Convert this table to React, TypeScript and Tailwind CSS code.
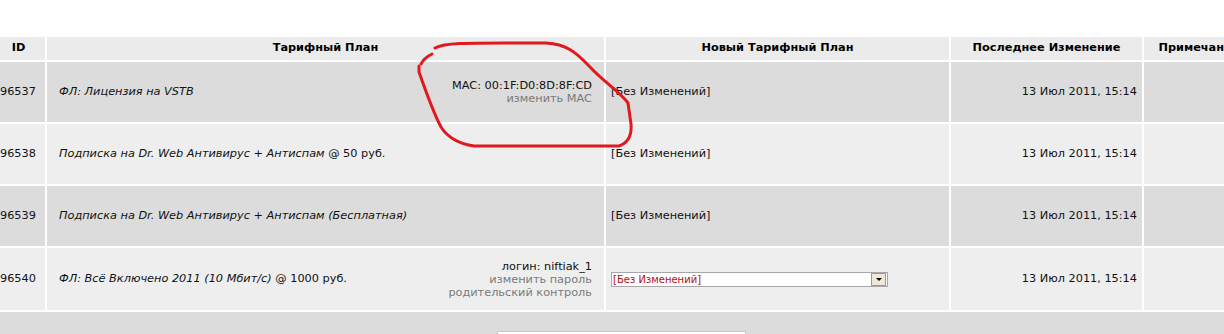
import React from 'react'

type Row = {
  id: string
  plan: string
  price?: string
  extra?: { main: string; links: string[] }
  select?: boolean
  dark: boolean
}

const rows: Row[] = [
  { id: '96537', plan: 'ФЛ: Лицензия на VSTB', extra: { main: 'MAC: 00:1F:D0:8D:8F:CD', links: ['изменить MAC'] }, dark: true },
  { id: '96538', plan: 'Подписка на Dr. Web Антивирус + Антиспам', price: '@ 50 руб.', dark: false },
  { id: '96539', plan: 'Подписка на Dr. Web Антивирус + Антиспам (Бесплатная)', dark: true },
  {
    id: '96540',
    plan: 'ФЛ: Всё Включено 2011 (10 Мбит/с)',
    price: '@ 1000 руб.',
    extra: { main: 'логин: niftiak_1', links: ['изменить пароль', 'родительский контроль'] },
    select: true,
    dark: false,
  },
]

function FakeSelect() {
  return (
    <div className="flex h-[15px] w-[277px] items-center border border-[#a7a6aa] bg-white">
      <span className="flex-1 pl-[1px] text-[10px] leading-[13px] text-[#b01010]">[Без Изменений]</span>
      <span className="mr-[1px] flex h-[13px] w-[15px] items-center justify-center border border-[#9a9a9a] bg-[#ece9d8]">
        <span className="border-x-[3px] border-t-[3px] border-x-transparent border-t-black" />
      </span>
    </div>
  )
}

export default function App() {
  return (
    <div className="relative h-[334px] w-[1224px] overflow-hidden bg-white font-['DejaVu_Sans',Verdana,sans-serif] text-[11.3px] text-[#111]">
      <table className="-ml-[10px] mt-[35px] w-[1266px] max-w-none table-fixed border-separate border-spacing-[2px]">
        <colgroup>
          <col className="w-[53px]" />
          <col className="w-[557px]" />
          <col className="w-[343px]" />
          <col className="w-[191px]" />
          <col className="w-[110px]" />
        </colgroup>
        <thead>
          <tr className="h-[23px] bg-[#ebebeb] font-bold text-black">
            <th className="p-0 text-center">ID</th>
            <th className="p-0 text-center">Тарифный План</th>
            <th className="p-0 text-center">Новый Тарифный План</th>
            <th className="p-0 text-center">Последнее Изменение</th>
            <th className="whitespace-nowrap p-0 text-center">Примечание</th>
          </tr>
        </thead>
        <tbody>
          {rows.map((r) => (
            <tr key={r.id} className={`${r.select ? 'h-[62px]' : 'h-[60px]'} ${r.dark ? 'bg-[#dcdcdc]' : 'bg-[#eeeeee]'}`}>
              <td className="p-0 pl-[8px] align-middle">{r.id}</td>
              <td className="p-0 px-[12px] align-middle">
                <div className="flex items-center justify-between">
                  <span className="whitespace-nowrap">
                    <i>{r.plan}</i>
                    {r.price && <span> {r.price}</span>}
                  </span>
                  {r.extra && (
                    <div className="text-right leading-[13px]">
                      <div>{r.extra.main}</div>
                      {r.extra.links.map((l) => (
                        <div key={l} className="text-[#7a7a7a]">
                          {l}
                        </div>
                      ))}
                    </div>
                  )}
                </div>
              </td>
              <td className="p-0 pl-[5px] align-middle">{r.select ? <FakeSelect /> : '[Без Изменений]'}</td>
              <td className="p-0 pr-[5px] text-right align-middle">13 Июл 2011, 15:14</td>
              <td className="p-0" />
            </tr>
          ))}
          <tr className="h-[40px] bg-[#dcdcdc]">
            <td colSpan={5} className="p-0 pt-[19px] align-top">
              <div className="ml-[505px] h-[21px] w-[249px] border border-[#c8c8c8] bg-white" />
            </td>
          </tr>
        </tbody>
      </table>

      <svg className="pointer-events-none absolute left-0 top-0" width="1224" height="334" viewBox="0 0 1224 334">
        <g fill="none" stroke="#e0191e" strokeWidth="3" strokeLinecap="round" strokeLinejoin="round">
          <path d="M421 64 C424 58 428 56 432 54" />
          <path d="M435 48 C446 42 470 43 546 43 C566 44 576 52 590 67 C604 82 620 92 628 103 L631 124 C632 136 628 143 619 146 L474 146 C460 144 448 138 441 127 C433 112 426 92 419 72 L419 66" />
        </g>
      </svg>
    </div>
  )
}
